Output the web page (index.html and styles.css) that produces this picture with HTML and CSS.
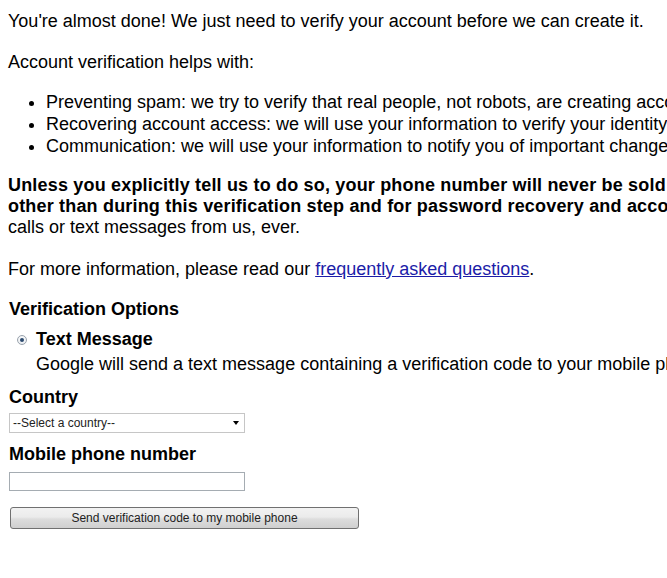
FILE: index.html
```html
<!DOCTYPE html>
<html>
<head>
<meta charset="utf-8">
<link rel="stylesheet" href="styles.css">
</head>
<body>
<div class="page">
  <p class="intro">You're almost done! We just need to verify your account before we can create it.</p>
  <p class="helps">Account verification helps with:</p>
  <ul class="reasons">
    <li>Preventing spam: we try to verify that real people, not robots, are creating accounts.</li>
    <li>Recovering account access: we will use your information to verify your identity if you lose your password.</li>
    <li>Communication: we will use your information to notify you of important changes to your account.</li>
  </ul>
  <p class="privacy"><b>Unless you explicitly tell us to do so, your phone number will never be sold or used for any purpose<br>other than during this verification step and for password recovery and account security.</b> You will not receive any marketing<br>calls or text messages from us, ever.</p>
  <p class="more">For more information, please read our <a href="#">frequently asked questions</a>.</p>

  <h3 class="options-title">Verification Options</h3>
  <div class="option">
    <div class="option-head">
      <span class="radio"><span class="radio-dot"></span></span>
      <span class="option-name">Text Message</span>
    </div>
    <div class="option-desc">Google will send a text message containing a verification code to your mobile phone.</div>
  </div>

  <h3 class="field-label">Country</h3>
  <div class="select">
    <span class="select-text">--Select a country--</span>
    <span class="select-arrow"></span>
  </div>

  <h3 class="field-label phone-label">Mobile phone number</h3>
  <div class="input"></div>

  <div class="button">Send verification code to my mobile phone</div>
</div>
</body>
</html>
```
FILE: styles.css
```css
html {
  overflow: hidden;
  background: #fff;
}
body {
  margin: 0;
  font-family: "Liberation Sans", Arial, sans-serif;
  font-size: 18px;
  line-height: 21px;
  color: #000;
}
.page {
  padding: 11px 0 0 8px;
  width: 1300px;
}
p {
  margin: 0;
  white-space: nowrap;
}
.helps {
  margin-top: 20px;
}
.reasons {
  margin: 18px 0 0 0;
  padding-left: 38px;
  line-height: 22px;
  white-space: nowrap;
}
.privacy {
  margin-top: 18px;
}
.privacy b {
  letter-spacing: 0.18px;
}
.more {
  margin-top: 21px;
}
.more a {
  color: #1c1ca8;
  text-decoration: underline;
}
h3 {
  margin: 0;
  font-size: 18px;
  line-height: 22px;
  font-weight: bold;
}
.options-title {
  margin-top: 18px;
  padding-left: 1px;
}
.option {
  margin-top: 8px;
  padding-left: 9px;
}
.option-head {
  display: flex;
  align-items: center;
  height: 22px;
}
.radio {
  box-sizing: border-box;
  width: 10px;
  height: 10px;
  border-radius: 50%;
  border: 1px solid #9aa3ad;
  background: radial-gradient(circle at 50% 40%, #ffffff 0%, #e4e8ec 100%);
  display: flex;
  align-items: center;
  justify-content: center;
  margin: 2px 9px 0 0;
}
.radio-dot {
  width: 4px;
  height: 4px;
  border-radius: 50%;
  background: #2c4a6e;
}
.option-name {
  font-size: 18px;
  font-weight: bold;
}
.option-desc {
  margin-top: 4px;
  padding-left: 19px;
  white-space: nowrap;
}
.field-label {
  margin-top: 11px;
  padding-left: 1px;
}
.select {
  box-sizing: border-box;
  margin: 5px 0 0 1px;
  width: 236px;
  height: 20px;
  border: 1px solid #c6c6c6;
  background: #fff;
  display: flex;
  align-items: center;
  justify-content: space-between;
  padding: 0 3px 0 3px;
  font-size: 12px;
  line-height: 18px;
  color: #222;
}
.select-arrow {
  width: 0;
  height: 0;
  border-left: 3.5px solid transparent;
  border-right: 3.5px solid transparent;
  border-top: 4px solid #000;
  margin-right: 2px;
}
.phone-label {
  margin-top: 10px;
}
.input {
  box-sizing: border-box;
  margin: 7px 0 0 1px;
  width: 236px;
  height: 19px;
  border: 1px solid #a5acb2;
  background: #fff;
}
.button {
  box-sizing: border-box;
  margin: 16px 0 0 2px;
  width: 349px;
  height: 22px;
  border: 1px solid #707070;
  border-radius: 3px;
  background: linear-gradient(#f2f2f2 0%, #ebebeb 45%, #dddddd 55%, #cfcfcf 100%);
  font-size: 12px;
  line-height: 20px;
  text-align: center;
  color: #222;
}
```
